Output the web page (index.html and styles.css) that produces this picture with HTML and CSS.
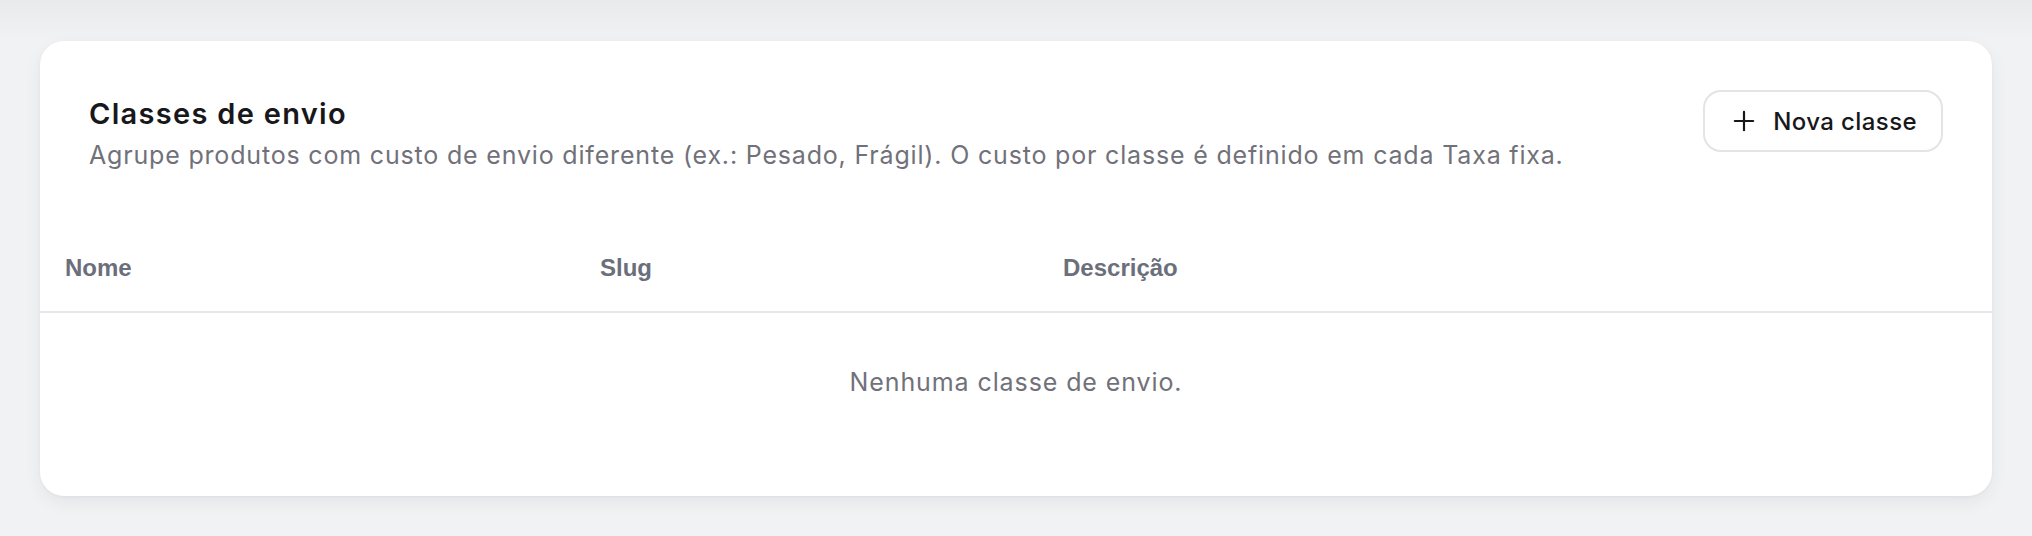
FILE: index.html
```html
<!DOCTYPE html>
<html lang="pt">
<head>
<meta charset="utf-8">
<title>Classes de envio</title>
<link rel="stylesheet" href="styles.css">
</head>
<body>
<main class="page">
  <section class="card">
    <header class="card-head">
      <div class="head-text">
        <h2 class="title">Classes de envio</h2>
        <p class="subtitle">Agrupe produtos com custo de envio diferente (ex.: Pesado, Frágil). O custo por classe é definido em cada Taxa fixa.</p>
      </div>
      <button class="btn" type="button">
        <svg class="btn-icon" viewBox="0 0 24 24" width="22" height="22" aria-hidden="true"><path d="M12 2v20M2 12h20" fill="none" stroke="currentColor" stroke-width="2.4" stroke-linecap="round"/></svg>
        <span>Nova classe</span>
      </button>
    </header>
    <div class="table">
      <div class="thead">
        <div class="th">Nome</div>
        <div class="th">Slug</div>
        <div class="th">Descrição</div>
      </div>
      <div class="empty">Nenhuma classe de envio.</div>
    </div>
  </section>
</main>
</body>
</html>
```

FILE: styles.css
```css
* { box-sizing: border-box; }
html, body { margin: 0; padding: 0; }
body {
  background: linear-gradient(#e9eaec 0, #f1f2f4 40px, #f1f2f4 100%);
  font-family: Inter, "Noto Sans", sans-serif;
  min-height: 536px;
}
.page {
  padding: 41px 40px 40px 40px;
}
.card {
  background: #ffffff;
  border-radius: 24px;
  box-shadow: 0 6px 18px rgba(20, 24, 40, 0.06), 0 1px 3px rgba(20, 24, 40, 0.04);
  padding-bottom: 45px;
  overflow: hidden;
}
.card-head {
  display: flex;
  justify-content: space-between;
  align-items: flex-start;
  padding: 49px 49px 58px 49px;
}
.head-text { padding-top: 6px; }
.title {
  margin: 0;
  font-size: 29px;
  line-height: 36px;
  font-weight: 600;
  color: #18181b;
  letter-spacing: 1.3px;
}
.subtitle {
  margin: 6px 0 0 0;
  font-size: 25px;
  line-height: 34px;
  font-weight: 400;
  color: #71717a;
  letter-spacing: 0.82px;
}
.btn {
  display: flex;
  align-items: center;
  gap: 18px;
  height: 62px;
  padding: 0 24px 0 28px;
  border: 2px solid #e4e4e7;
  border-radius: 18px;
  background: #fff;
  color: #18181b;
  font-family: Inter, "Noto Sans", sans-serif;
  font-size: 24px;
  font-weight: 500;
  letter-spacing: 0.4px;
  cursor: pointer;
}
.btn-icon { display: block; }
.thead {
  display: grid;
  grid-template-columns: 535px 463px 1fr;
  border-bottom: 2px solid #e6e7ea;
}
.th {
  padding: 21px 25px 27px 25px;
  font-family: "Liberation Sans", Arial, sans-serif;
  font-size: 24px;
  line-height: 33px;
  font-weight: 700;
  color: #6b6f7b;
}
.empty {
  padding: 53px 0;
  text-align: center;
  font-size: 25px;
  line-height: 32px;
  color: #71717a;
  letter-spacing: 0.9px;
}
```
